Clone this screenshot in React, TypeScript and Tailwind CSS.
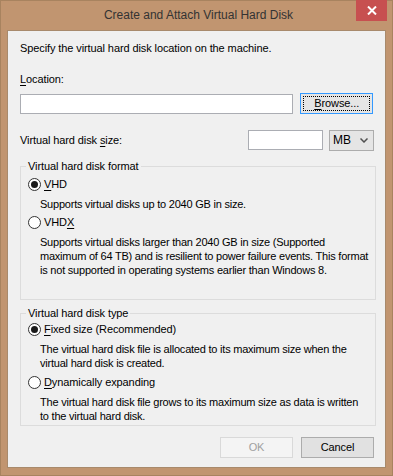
import React from 'react';

const font = { fontFamily: '"Liberation Sans", Arial, sans-serif' };

const U = ({ children }: { children: React.ReactNode }) => <span className="underline underline-offset-[2px]">{children}</span>;

const Radio = ({ checked, children }: { checked?: boolean; children: React.ReactNode }) => (
  <div className="flex items-center h-[15px]">
    <span className="w-[13px] h-[13px] rounded-full border border-[#333333] bg-white flex items-center justify-center shrink-0">
      {checked && <span className="w-[7px] h-[7px] rounded-full bg-[#1a1a1a]" />}
    </span>
    <span className="ml-[3px]">{children}</span>
  </div>
);

const Group = ({ title, className, children }: { title: string; className?: string; children: React.ReactNode }) => (
  <fieldset className={`border border-[#dcdcdc] mx-0 pl-[7px] pr-0 min-w-0 ${className ?? ''}`}>
    <legend className="-ml-[2px] px-[2px] leading-[15px]">{title}</legend>
    {children}
  </fieldset>
);

const Desc = ({ className, children }: { className?: string; children: React.ReactNode }) => (
  <div className={`pl-[12px] leading-[14px] whitespace-nowrap tracking-[-0.22px] ${className ?? ''}`}>{children}</div>
);

export default function App() {
  return (
    <div className="w-[393px] h-[476px] bg-[#c19570] border border-[#a8835f] flex flex-col text-[11px] tracking-[-0.1px] text-black" style={font}>
      {/* Title bar */}
      <div className="h-[29px] flex items-start relative">
        <div className="flex-1 text-center text-[12px] tracking-normal leading-[29px] text-[#333333] pl-[4px]">Create and Attach Virtual Hard Disk</div>
        <button className="absolute right-[5px] top-[-1px] w-[31px] h-[21px] bg-[#c75050] flex items-center justify-center">
          <svg width="10" height="9" viewBox="0 0 10 9">
            <path d="M1 0.5 L9 8.5 M9 0.5 L1 8.5" stroke="white" strokeWidth="2" />
          </svg>
        </button>
      </div>

      {/* Content */}
      <div className="mx-[6px] h-[438px] bg-[#f0f0f0] border border-[#a88a6c] px-[12px] flex flex-col leading-[15px]">
        <div className="mt-[10px]">Specify the virtual hard disk location on the machine.</div>

        <div className="mt-[16px]"><U>L</U>ocation:</div>
        <div className="mt-[6px] flex items-center">
          <div className="w-[275px] h-[20px] bg-white border border-[#abadb3]" />
          <button className="ml-[7px] w-[73px] h-[21px] bg-[#e5e5e5] border border-[#3399ff] p-[2px]">
            <span className="w-full h-full border border-dotted border-black flex items-center justify-center">
              <U>B</U>rowse...
            </span>
          </button>
        </div>

        <div className="mt-[16px] flex items-center h-[20px]">
          <span className="flex-1">Virtual hard disk <U>s</U>ize:</span>
          <div className="w-[75px] h-[20px] bg-white border border-[#abadb3]" />
          <div className="ml-[6px] mr-[-1px] w-[45px] h-[21px] bg-[#e5e5e5] border border-[#acacac] flex items-center justify-between pl-[3px] pr-[5px]">
            <span className="text-[12px] tracking-normal">MB</span>
            <svg width="8" height="5" viewBox="0 0 8 5">
              <path d="M0.5 0.5 L4 4 L7.5 0.5" stroke="#505050" strokeWidth="1.5" fill="none" />
            </svg>
          </div>
        </div>

        <Group title="Virtual hard disk format" className="mt-[9px] h-[141px] w-[356px]">
          <div className="mt-[3px]">
            <Radio checked><U>V</U>HD</Radio>
          </div>
          <Desc className="mt-[5px]">Supports virtual disks up to 2040 GB in size.</Desc>
          <div className="mt-[4px]">
            <Radio>VHD<U>X</U></Radio>
          </div>
          <Desc className="mt-[5px]">
            Supports virtual disks larger than 2040 GB in size (Supported<br />
            maximum of 64 TB) and is resilient to power failure events. This format<br />
            is not supported in operating systems earlier than Windows 8.
          </Desc>
        </Group>

        <Group title="Virtual hard disk type" className="mt-[6px] h-[120px] w-[356px]">
          <div className="mt-[1px]">
            <Radio checked><U>F</U>ixed size (Recommended)</Radio>
          </div>
          <Desc className="mt-[5px]">
            The virtual hard disk file is allocated to its maximum size when the<br />
            virtual hard disk is created.
          </Desc>
          <div className="mt-[5px]">
            <Radio><U>D</U>ynamically expanding</Radio>
          </div>
          <Desc className="mt-[5px]">
            The virtual hard disk file grows to its maximum size as data is written<br />
            to the virtual hard disk.
          </Desc>
        </Group>

        <div className="mt-[11px] flex justify-end gap-[8px]">
          <button className="w-[73px] h-[21px] bg-[#f4f4f4] border border-[#d9d9d9] text-[#a0a0a0]">OK</button>
          <button className="w-[73px] h-[21px] bg-[#e1e1e1] border border-[#acacac] mr-[-1px]">Cancel</button>
        </div>
      </div>
    </div>
  );
}
